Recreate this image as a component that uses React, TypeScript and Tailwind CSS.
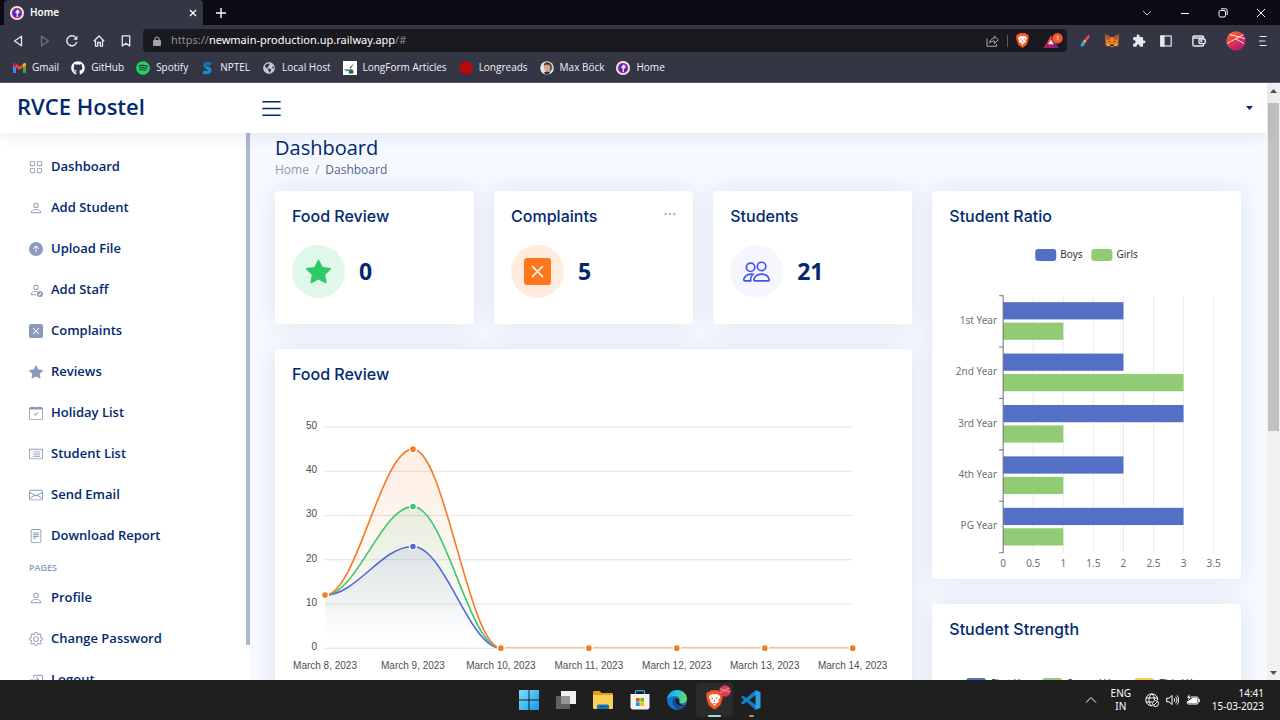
import React from 'react';
import {
  BsArrowUpCircleFill,
  BsBoxArrowInRight,
  BsCalendarCheck,
  BsCardList,
  BsEnvelope,
  BsFileText,
  BsGear,
  BsGrid,
  BsList,
  BsPeople,
  BsPerson,
  BsPersonCheck,
  BsStarFill,
  BsThreeDots,
  BsXSquareFill,
} from 'react-icons/bs';
import { FaGithub, FaSpotify, FaGlobeAmericas } from 'react-icons/fa';
import { MdExtension } from 'react-icons/md';

const menuItems = [
  { label: 'Dashboard', icon: BsGrid },
  { label: 'Add Student', icon: BsPerson },
  { label: 'Upload File', icon: BsArrowUpCircleFill },
  { label: 'Add Staff', icon: BsPersonCheck },
  { label: 'Complaints', icon: BsXSquareFill },
  { label: 'Reviews', icon: BsStarFill },
  { label: 'Holiday List', icon: BsCalendarCheck },
  { label: 'Student List', icon: BsCardList },
  { label: 'Send Email', icon: BsEnvelope },
  { label: 'Download Report', icon: BsFileText },
];

const pageItems = [
  { label: 'Profile', icon: BsPerson },
  { label: 'Change Password', icon: BsGear },
  { label: 'Logout', icon: BsBoxArrowInRight },
];

/* ---------- Browser icons ---------- */

function SiteIcon() {
  return (
    <svg viewBox="0 0 14 14" className="w-3.5 h-3.5 shrink-0">
      <circle cx="7" cy="7" r="7" fill="#f3eef8" />
      <circle cx="7" cy="7" r="4.6" fill="#2b2ee0" stroke="#d8285c" strokeWidth="1.4" />
      <path d="M7 3.6c1.8.2 3 1.4 2.6 3.2L8 8v3H6.600V7.400L5 6.800z" fill="#f0d8ee" />
    </svg>
  );
}

function GmailIcon() {
  return (
    <svg viewBox="0 0 13 10" className="w-[13px] h-2.5 shrink-0">
      <path d="M0 1.500V10h3V4.200z" fill="#4285f4" />
      <path d="M13 1.500V10h-3V4.200z" fill="#34a853" />
      <path d="M3 .8v3.700L6.500 7 10 4.500V.8L6.500 3.400z" fill="#ea4335" />
      <path d="M0 1.400C0 0 1.600-.4 3 .8v3.700L0 2.300z" fill="#c5221f" />
      <path d="M13 1.400C13 0 11.400-.4 10 .8v3.700l3-2.200z" fill="#fbbc04" />
    </svg>
  );
}

function NptelIcon() {
  return (
    <svg viewBox="0 0 12 14" className="w-3 h-3.5 shrink-0" fill="none" strokeWidth="3.2">
      <path d="M10 3.200C7 1.800 3.800 2 3.800 4.400c0 1.800 2 2.200 3.400 2.800" stroke="#1b6fae" />
      <path d="M5.500 6.600c2 .6 3.600 1.200 3.400 2.800C8.600 11.800 5 12 2 10.900" stroke="#1a8fd4" />
    </svg>
  );
}

function ArticlesIcon() {
  return (
    <svg viewBox="0 0 14 14" className="w-3.5 h-3.5 shrink-0">
      <rect width="14" height="14" fill="#fff" />
      <path d="M11.800 2 7.400 7.400l-1-1z" fill="#35523f" />
      <path d="M1.500 8.500c2 1.800 4 1.200 5.200 0M6 10c1-2 2.500-2 4-.6v2.800H6z" fill="#2e6b4d" stroke="#2e6b4d" strokeWidth=".7" />
    </svg>
  );
}

function LongreadsIcon() {
  return (
    <svg viewBox="0 0 14 14" className="w-3.5 h-3.5 shrink-0">
      <circle cx="7" cy="7" r="6.700" fill="#b50a0e" />
      <circle cx="7" cy="7" r="3" fill="none" stroke="#c21212" strokeWidth=".8" />
    </svg>
  );
}

function PortraitIcon() {
  return (
    <svg viewBox="0 0 14 14" className="w-3.5 h-3.5 shrink-0">
      <circle cx="7" cy="7" r="6.800" fill="#e9e7e4" />
      <path d="M9 1.500c2.600 1.200 3.600 3.600 3.300 6L9.500 12z" fill="#59605a" />
      <ellipse cx="7" cy="6.400" rx="3" ry="4" fill="#d9a384" />
      <path d="M3.700 5.600C3.600 2.600 5 1.200 7.200 1.200S10.600 3 10.200 5.600L9.300 3.800H5z" fill="#4a342a" />
      <path d="M4 11.500c2-1.500 4-1.500 6 0l-1.500 2h-3z" fill="#2f3136" />
    </svg>
  );
}

function BraveLion({ className }: { className: string }) {
  return (
    <svg viewBox="0 0 14 16" className={className}>
      <path d="M4 0h6l1.300 1.400 1.400-.1L14 3.300l-.5 1.300.3 1.300-2 6.500L7 16l-4.800-3.600-2-6.500.3-1.300L0 3.300l1.300-2 1.400.1z" fill="#fb5420" />
      <path d="M7 3.300 9 3l2.200 1.200.6 1.800-1.500 2 .5 1.500-2 1.200L7 13l-1.800-2.300-2-1.200.5-1.500-1.500-2 .6-1.800L5 3z" fill="#fff" />
      <path d="m3.800 5.600 2 .7-.3 1.300zM10.200 5.600l-2 .7.3 1.300zM7 7l.6 2L7 9.600 6.400 9zM5.600 10.400h2.800L7 11.500z" fill="#fb5420" />
    </svg>
  );
}

function RewardsIcon() {
  return (
    <svg viewBox="0 0 20 16" className="w-5 h-4">
      <path d="M8 2 4.200 9.500.5 15H4l4-4.500z" fill="#ff4724" />
      <path d="M.5 15h15L12 10.500H4z" fill="#9e1f63" />
      <path d="m8 2 7.500 13L8 10.500z" fill="#662d91" />
      <path d="m8 6.800 2.800 4.500H5.200z" fill="#fff" />
      <circle cx="14.500" cy="5.200" r="5.200" fill="#fb542b" />
      <path d="m13.800 4 1-.8v4" stroke="#fff" strokeWidth=".8" fill="none" />
    </svg>
  );
}

function BrushIcon() {
  return (
    <svg viewBox="0 0 10 12" className="w-2.5 h-3">
      <path d="M9.300.3c.9.700.4 2.200-.4 3.200L6.500 6.300 4.300 4.600 6.700 1.500C7.500.5 8.600-.2 9.300.3z" fill="#e2435c" />
      <path d="m4.300 4.600 2.200 1.700-1.400 1.800L3 6.300z" fill="#f4c06a" />
      <path d="M3 6.300l2.100 1.800c.2 2-1.800 3.700-4.600 3.300C1.600 10.200.8 7.600 3 6.300z" fill="#3da7c9" />
    </svg>
  );
}

function FoxIcon() {
  return (
    <svg viewBox="0 0 14 13" className="w-3.5 h-[13px]">
      <path d="M.6.300 5.400 3.300h3.200L13.400.300 13.800 5l-.6 3 .5 2-1.500 2.500-2.700-.7-1.500 1.100H6l-1.500-1.100-2.700.7L.3 10l.5-2-.6-3z" fill="#e8821e" />
      <path d="M.6.300 5.400 3.300 4.500 6 .8 5.200zM13.400.300 8.600 3.300l.9 2.700 3.700-.8z" fill="#b5562a" />
      <path d="m3.200 7 2 .3-.4 1.400zM10.800 7l-2 .3.400 1.400z" fill="#2b3341" />
      <path d="M5.600 10.600h2.800l.2 1.500H5.400z" fill="#16120f" />
      <path d="m1.800 12.200 1.400-2 1.500 1.300zM12.200 12.200l-1.400-2-1.500 1.300z" fill="#d8c3b4" />
    </svg>
  );
}

function AvatarIcon() {
  return (
    <svg viewBox="0 0 20 20" className="w-5 h-5">
      <defs>
        <linearGradient id="avatar" x1="0" y1="0" x2=".6" y2="1">
          <stop offset="0" stopColor="#ff7a2b" />
          <stop offset=".5" stopColor="#e8384a" />
          <stop offset="1" stopColor="#b8177c" />
        </linearGradient>
      </defs>
      <circle cx="10" cy="10" r="9.700" fill="url(#avatar)" />
      <path d="M3.500 3.500 19 7.500M1 12.500 17.500 3.500M10 8l8 4.500" stroke="#fde4dc" strokeWidth="1" fill="none" />
    </svg>
  );
}

/* ---------- Browser window ---------- */

function TabStrip() {
  return (
    <div className="flex h-[25px] shrink-0 items-center bg-[#0b0a15] pl-1 text-white">
      <div className="flex h-full w-[199px] items-center rounded-t bg-[#343644] pl-1.5 pr-1">
        <SiteIcon />
        <span className="ml-1.5 flex-1 text-[10px] font-semibold">Home</span>
        <button aria-label="Close tab" className="flex h-3 w-3 items-center justify-center">
          <svg viewBox="0 0 8 8" className="h-2 w-2" stroke="#fff" strokeWidth="1.300">
            <path d="m1 1 6 6M7 1 1 7" />
          </svg>
        </button>
      </div>
      <button aria-label="New tab" className="ml-3 flex h-3 w-3 items-center justify-center">
        <svg viewBox="0 0 10 10" className="h-2.5 w-2.5" stroke="#fff" strokeWidth="1.400">
          <path d="M5 0v10M0 5h10" />
        </svg>
      </button>
      <div className="ml-auto flex">
        <button aria-label="Search tabs" className="flex w-[38px] justify-center">
          <svg viewBox="0 0 10 10" className="h-2.5 w-2.5" fill="none" stroke="#b9b9c0">
            <path d="m1 3 4 4 4-4" />
          </svg>
        </button>
        <button aria-label="Minimize" className="flex w-[38px] justify-center">
          <svg viewBox="0 0 10 10" className="h-2.5 w-2.5" stroke="#fff">
            <path d="M1 5.500h8" />
          </svg>
        </button>
        <button aria-label="Restore" className="flex w-[38px] justify-center">
          <svg viewBox="0 0 10 10" className="h-2.5 w-2.5" fill="none" stroke="#fff">
            <rect x="1" y="2.500" width="6.500" height="6.500" rx="1.500" />
            <path d="M3 .8h4.500a1.700 1.700 0 0 1 1.700 1.700V7" />
          </svg>
        </button>
        <button aria-label="Close window" className="flex w-[38px] justify-center">
          <svg viewBox="0 0 10 10" className="h-2.5 w-2.5" stroke="#fff">
            <path d="m1 1 8 8M9 1 1 9" />
          </svg>
        </button>
      </div>
    </div>
  );
}

function ToolButton({ label, children }: { label: string; children: React.ReactNode }) {
  return (
    <button aria-label={label} className="flex h-6 w-[27px] shrink-0 items-center justify-center">
      {children}
    </button>
  );
}

function Toolbar() {
  return (
    <div className="flex h-[31px] shrink-0 items-center bg-[#343644] px-1 text-[#e8e8ee]">
      <ToolButton label="Back">
        <svg viewBox="0 0 12 12" className="h-3 w-3" fill="none" stroke="currentColor" strokeWidth="1.300" strokeLinejoin="round">
          <path d="M9.500 1.200v9.600L2.500 6z" />
        </svg>
      </ToolButton>
      <ToolButton label="Forward">
        <svg viewBox="0 0 12 12" className="h-3 w-3" fill="none" stroke="#72747f" strokeWidth="1.300" strokeLinejoin="round">
          <path d="M2.500 1.200v9.600l7-4.800z" />
        </svg>
      </ToolButton>
      <ToolButton label="Reload">
        <svg viewBox="0 0 12 12" className="h-3 w-3" fill="none" stroke="currentColor" strokeWidth="1.400">
          <path d="M10.700 7A5 5 0 1 1 9.500 2.300" />
          <path d="M11.400.8v4H7.300z" fill="currentColor" stroke="none" />
        </svg>
      </ToolButton>
      <ToolButton label="Home">
        <svg viewBox="0 0 12 12" className="h-3 w-3" fill="none" stroke="currentColor" strokeWidth="1.300" strokeLinejoin="round">
          <path d="M.8 6.200 6 1l5.200 5.200M2.500 5.500v5.700h2.200V7.500h2.600v3.700h2.200V5.500" />
        </svg>
      </ToolButton>
      <ToolButton label="Bookmark this page">
        <svg viewBox="0 0 12 12" className="h-3 w-3" fill="none" stroke="currentColor" strokeWidth="1.300" strokeLinejoin="round">
          <path d="M2.300.8h7.400v10.200L6 8.200l-3.700 2.800z" />
        </svg>
      </ToolButton>
      <div className="ml-1 flex h-[23px] min-w-0 flex-1 items-center rounded-sm bg-[#191a1f] pl-2.5 pr-1 text-[11px] text-[#8d8e94]">
        <svg viewBox="0 0 8 10" className="mr-2.5 h-2.5 w-2 shrink-0" fill="#a4a5a9">
          <rect y="4" width="8" height="6" rx="1" />
          <path d="M2 4.500V3a2 2 0 0 1 4 0v1.500" fill="none" stroke="#a4a5a9" strokeWidth="1.200" />
        </svg>
        <span>https://</span>
        <input
          aria-label="Address"
          defaultValue="newmain-production.up.railway.app"
          className="field-sizing-content bg-transparent text-white outline-none"
        />
        <span>/#</span>
        <div className="ml-auto flex items-center">
          <button aria-label="Share">
            <svg viewBox="0 0 13 12" className="h-3 w-[13px]" fill="none" stroke="#a9aab0">
              <path d="M1 3.500v7.700h9.500V9" />
              <path d="M3.500 8C4 5 5.800 3.500 8.300 3.300V1l4 3.800-4 3.700V6C6.300 6 4.800 6.600 3.500 8z" strokeLinejoin="round" />
            </svg>
          </button>
          <span className="mx-2 h-3 w-px bg-[#5c5d63]" />
          <button aria-label="Brave Shields">
            <BraveLion className="h-[15px] w-[13px]" />
          </button>
          <button aria-label="Brave Rewards" className="ml-3.5">
            <RewardsIcon />
          </button>
        </div>
      </div>
      <div className="ml-1 flex items-center">
        <ToolButton label="Color picker"><BrushIcon /></ToolButton>
        <ToolButton label="Wallet extension"><FoxIcon /></ToolButton>
        <ToolButton label="Extensions"><MdExtension className="h-3.5 w-3.5" /></ToolButton>
        <ToolButton label="Sidebar">
          <svg viewBox="0 0 12 12" className="h-3 w-3" fill="none" stroke="currentColor" strokeWidth="1.200">
            <rect x=".8" y="1" width="10.400" height="10" />
            <path d="M1 1h3v10H1z" fill="currentColor" />
          </svg>
        </ToolButton>
        <span className="w-1.5" />
        <ToolButton label="Wallet">
          <svg viewBox="0 0 14 12" className="h-3 w-3.5" fill="none" stroke="currentColor" strokeWidth="1.400">
            <path d="M11.500 3.500V2.200c0-.8-.5-1.200-1.300-1.200H2.300C1.500 1 .9 1.500.9 2.300v7.200c0 .9.600 1.500 1.400 1.500h8c.8 0 1.300-.5 1.300-1.300V9M1 3h10" />
            <rect x="7" y="4" width="6.200" height="4.600" rx="1" />
            <circle cx="9.300" cy="6.300" r=".5" />
          </svg>
        </ToolButton>
        <span className="w-2.5" />
        <ToolButton label="Profile"><AvatarIcon /></ToolButton>
        <ToolButton label="Menu">
          <svg viewBox="0 0 8 12" className="h-3 w-2" stroke="currentColor" strokeWidth="1.200">
            <path d="M.5 1.500h7M0 6h6.500M.5 10.500h7" />
          </svg>
        </ToolButton>
      </div>
    </div>
  );
}

const bookmarks = [
  { label: 'Gmail', icon: <GmailIcon /> },
  { label: 'GitHub', icon: <FaGithub className="h-3.5 w-3.5 text-white" /> },
  { label: 'Spotify', icon: <FaSpotify className="h-3.5 w-3.5 text-[#1ed760]" /> },
  { label: 'NPTEL', icon: <NptelIcon /> },
  { label: 'Local Host', icon: <FaGlobeAmericas className="h-3 w-3 text-[#c9cad2]" /> },
  { label: 'LongForm Articles', icon: <ArticlesIcon /> },
  { label: 'Longreads', icon: <LongreadsIcon /> },
  { label: 'Max Böck', icon: <PortraitIcon /> },
  { label: 'Home', icon: <SiteIcon /> },
];

function BookmarksBar() {
  return (
    <nav className="flex h-[27px] shrink-0 items-start gap-3 border-b border-[#5b5d69] bg-[#343644] pl-3 pt-1 font-['Open_Sans',sans-serif] text-[10px] text-[#f1f1f4]">
      {bookmarks.map((item) => (
        <a key={item.label} href="#" className="flex h-[15px] items-center gap-1.5 whitespace-nowrap">
          <span className="flex w-3.5 justify-center">{item.icon}</span>
          {item.label}
        </a>
      ))}
    </nav>
  );
}

/* ---------- Dashboard ---------- */

function SidebarLink({ label, icon: Icon }: { label: string; icon: React.ComponentType<{ className?: string }> }) {
  return (
    <li>
      <a href="#" className="flex h-[37px] items-center gap-2 rounded px-3 text-[13px] font-semibold text-[#012970]">
        <Icon className="h-3.5 w-3.5 text-[#899bbd]" />
        {label}
      </a>
    </li>
  );
}

function Sidebar() {
  return (
    <aside className="flex w-[250px] shrink-0 overflow-hidden bg-white font-['Open_Sans',sans-serif]">
      <ul className="flex flex-1 flex-col gap-1 px-[17px] pt-[15px]">
        {menuItems.map((item) => (
          <SidebarLink key={item.label} {...item} />
        ))}
        <li className="h-[17px] px-3 text-[9px] leading-5 font-semibold text-[#899bbd]">PAGES</li>
        {pageItems.map((item) => (
          <SidebarLink key={item.label} {...item} />
        ))}
      </ul>
      <div className="mb-[35px] w-1 bg-[#aab7cf]" />
    </aside>
  );
}

function Card({ title, menu, children }: { title: string; menu?: boolean; children: React.ReactNode }) {
  return (
    <section className="relative rounded bg-white pt-4 shadow-[0_0_25px_rgba(1,41,112,0.1)]">
      <h2 className="mb-px px-[17px] font-['Inter',sans-serif] text-base leading-[18px] font-medium text-[#012970]">{title}</h2>
      {menu && (
        <button aria-label="Card options" className="absolute right-4 top-4 text-[#aab7cf]">
          <BsThreeDots className="h-3.5 w-3.5" />
        </button>
      )}
      {children}
    </section>
  );
}

function StatCard({ title, value, menu, tint, children }: { title: string; value: string; menu?: boolean; tint: string; children: React.ReactNode }) {
  return (
    <Card title={title} menu={menu}>
      <div className="flex items-center gap-3.5 px-[17px] pb-[26px] pt-[19px]">
        <div className={`flex h-[53px] w-[53px] items-center justify-center rounded-full ${tint}`}>{children}</div>
        <span className="text-[23px] font-bold text-[#012970]">{value}</span>
      </div>
    </Card>
  );
}

const dates = ['March 8, 2023', 'March 9, 2023', 'March 10, 2023', 'March 11, 2023', 'March 12, 2023', 'March 13, 2023', 'March 14, 2023'];
const series = [
  { id: 'blue', color: '#5468dc', values: [12, 23, 0, 0, 0, 0, 0] },
  { id: 'green', color: '#3fc56f', values: [12, 32, 0, 0, 0, 0, 0] },
  { id: 'orange', color: '#f47a24', values: [12, 45, 0, 0, 0, 0, 0] },
];

const pointX = (i: number) => 33 + i * 87.9;
const pointY = (v: number) => 264 - v * 4.42;

function curve(values: number[]) {
  return values
    .map((v, i) => {
      if (i === 0) return `M${pointX(0)} ${pointY(v)}`;
      const bend = 87.9 * 0.36;
      return `C${pointX(i - 1) + bend} ${pointY(values[i - 1])} ${pointX(i) - bend} ${pointY(v)} ${pointX(i)} ${pointY(v)}`;
    })
    .join('');
}

function ReviewChart() {
  return (
    <svg viewBox="0 0 603 320" className="block w-full font-['Liberation_Sans',sans-serif]" fontSize="10" fill="#4a5053">
      <defs>
        {series.map((s) => (
          <linearGradient key={s.id} id={`fill-${s.id}`} x1="0" y1="0" x2="0" y2="1">
            <stop offset="0" stopColor={s.color} stopOpacity=".13" />
            <stop offset=".9" stopColor={s.color} stopOpacity="0" />
          </linearGradient>
        ))}
      </defs>
      {[0, 10, 20, 30, 40, 50].map((v) => (
        <g key={v}>
          <path d={`M33 ${pointY(v)}H560`} stroke="#e3e3e3" />
          <text x="25" y={pointY(v) + 2} textAnchor="end">{v}</text>
        </g>
      ))}
      {series.map((s) => (
        <path key={s.id} d={`${curve(s.values)}V264H33Z`} fill={`url(#fill-${s.id})`} />
      ))}
      {/* the flat tail is shared by all three series, so it is drawn once */}
      {series.map((s) => (
        <path key={s.id} d={curve(s.values.slice(0, 3))} fill="none" stroke={s.color} strokeWidth="1.600" />
      ))}
      <path d={`M${pointX(2)} 263.500H${pointX(6)}`} stroke="#f4ac7c" />
      {series.map((s) =>
        s.values.map((v, i) => (
          <circle key={`${s.id}${i}`} cx={pointX(i)} cy={pointY(v)} r="3.400" fill={s.color} stroke="#fff" strokeWidth="1.200" />
        ))
      )}
      {dates.map((d, i) => (
        <text key={d} x={pointX(i)} y="285" textAnchor="middle">{d}</text>
      ))}
    </svg>
  );
}

const ratio = [
  { label: '1st Year', boys: 2, girls: 1 },
  { label: '2nd Year', boys: 2, girls: 3 },
  { label: '3rd Year', boys: 3, girls: 1 },
  { label: '4th Year', boys: 2, girls: 1 },
  { label: 'PG Year', boys: 3, girls: 1 },
];

function RatioChart() {
  return (
    <svg viewBox="0 0 308 352" className="block w-full font-['Noto_Sans',sans-serif]" fontSize="10" fill="#6e7079">
      <rect x="103" y="23" width="21" height="12" rx="3" fill="#5470c6" />
      <text x="128" y="32" fill="#333">Boys</text>
      <rect x="159" y="23" width="21" height="12" rx="3" fill="#91cc75" />
      <text x="184" y="32" fill="#333">Girls</text>
      {[0, 0.5, 1, 1.5, 2, 2.5, 3, 3.5].map((v) => (
        <g key={v}>
          {v > 0 && <path d={`M${71 + v * 60} 70V326`} stroke="#e9ebf1" />}
          <text x={71 + v * 60} y="340" textAnchor="middle">{v}</text>
        </g>
      ))}
      {ratio.map((row, i) => (
        <g key={row.label}>
          <rect x="71" y={76 + i * 51.3} width={row.boys * 60} height="17.200" fill="#5470c6" />
          <rect x="71" y={96.4 + i * 51.3} width={row.girls * 60} height="17.200" fill="#91cc75" />
          <text x="65" y={97.5 + i * 51.3} textAnchor="end">{row.label}</text>
        </g>
      ))}
      <path d="M67 69.500h4v256.500h-4M67 120.800h4M67 172.100h4M67 223.400h4M67 274.700h4" fill="none" stroke="#6e7079" />
    </svg>
  );
}

function StrengthChart() {
  return (
    <svg viewBox="0 0 308 300" className="block w-full font-['Noto_Sans',sans-serif]" fontSize="10" fill="#333">
      <rect x="34" y="39" width="20" height="12" rx="3" fill="#5470c6" />
      <text x="59" y="48">First Year</text>
      <rect x="110" y="39" width="20" height="12" rx="3" fill="#91cc75" />
      <text x="135" y="48">Second Year</text>
      <rect x="202" y="39" width="20" height="12" rx="3" fill="#fac858" />
      <text x="227" y="48">Third Year</text>
    </svg>
  );
}

function Dashboard() {
  return (
    <main className="min-w-0 flex-1 overflow-hidden bg-[#f6f9ff] pl-[25px] pr-[26px] pt-0.5">
      <h1 className="text-xl leading-[26px] text-[#012970]">Dashboard</h1>
      <nav className="mb-3 flex gap-1.5 text-xs leading-[18px] text-[#899bbd]">
        <a href="#">Home</a>
        <span>/</span>
        <span className="text-[#51678f]">Dashboard</span>
      </nav>
      <div className="grid grid-cols-3 gap-5">
        <div className="col-span-2 flex flex-col gap-[25px]">
          <div className="grid grid-cols-3 gap-5">
            <StatCard title="Food Review" value="0" tint="bg-[#e0f8e9]">
              <BsStarFill className="h-[25px] w-[25px] text-[#2eca6a]" />
            </StatCard>
            <StatCard title="Complaints" value="5" tint="bg-[#ffecdf]" menu>
              <BsXSquareFill className="h-[27px] w-[27px] text-[#ff771d]" />
            </StatCard>
            <StatCard title="Students" value="21" tint="bg-[#f6f6fe]">
              <BsPeople className="h-[27px] w-[27px] text-[#4154f1]" />
            </StatCard>
          </div>
          <Card title="Food Review">
            <div className="px-[17px]">
              <ReviewChart />
            </div>
          </Card>
        </div>
        <div className="flex flex-col gap-[25px]">
          <Card title="Student Ratio">
            <RatioChart />
          </Card>
          <Card title="Student Strength">
            <StrengthChart />
          </Card>
        </div>
      </div>
    </main>
  );
}

function PageScrollbar() {
  return (
    <div className="flex w-[13px] shrink-0 flex-col items-center bg-[#f1f1f1]">
      <svg viewBox="0 0 13 20" className="h-5 w-[13px] shrink-0" fill="#505050">
        <path d="m6.500 6 3.500 4H3z" />
      </svg>
      <div className="h-[55%] w-[11px] bg-[#c1c1c1]" />
      <svg viewBox="0 0 13 14" className="mt-auto h-3.5 w-[13px] shrink-0" fill="#505050">
        <path d="M6.500 9 10 5H3z" />
      </svg>
    </div>
  );
}

/* ---------- Taskbar ---------- */

function TaskButton({ label, active, children }: { label: string; active?: boolean; children: React.ReactNode }) {
  return (
    <button aria-label={label} className={`relative flex h-[34px] w-[37px] items-center justify-center rounded ${active ? 'bg-[#2b2b2b]' : ''}`}>
      {children}
    </button>
  );
}

function Taskbar() {
  return (
    <footer className="grid h-10 shrink-0 grid-cols-[1fr_auto_1fr] items-center bg-[#1f1f1f] text-white">
      <div />
      <div className="flex">
        <TaskButton label="Start">
          <svg viewBox="0 0 20 20" className="h-5 w-5">
            <defs>
              <linearGradient id="win" x1="0" y1="0" x2="1" y2="1">
                <stop offset="0" stopColor="#7fe0fd" />
                <stop offset="1" stopColor="#1597e8" />
              </linearGradient>
            </defs>
            <path d="M0 0h9.500v9.500H0zM10.500 0H20v9.500h-9.500zM0 10.500h9.500V20H0zM10.500 10.500H20V20h-9.500z" fill="url(#win)" />
          </svg>
        </TaskButton>
        <TaskButton label="Task view">
          <svg viewBox="0 0 20 20" className="h-5 w-5">
            <rect x="5" y="1" width="15" height="13" fill="#f0f0f0" />
            <rect x="0" y="6" width="14" height="13" fill="#777" fillOpacity=".75" />
          </svg>
        </TaskButton>
        <TaskButton label="File Explorer">
          <svg viewBox="0 0 20 20" className="h-5 w-5">
            <path d="M0 2.500C0 1.500.5 1 1.500 1h5l2 2h10c1 0 1.500.5 1.500 1.500V8H0z" fill="#dfa01c" />
            <path d="M0 5h20v12.500c0 1-.5 1.500-1.500 1.500h-17C.5 19 0 18.500 0 17.500z" fill="#fcd053" />
            <path d="M4 19v-3c0-1 .6-1.500 1.500-1.500h9c.9 0 1.500.5 1.500 1.500v3z" fill="#1873c5" />
            <path d="M6.500 16.500h7" stroke="#0c4f93" />
          </svg>
        </TaskButton>
        <TaskButton label="Microsoft Store">
          <svg viewBox="0 0 20 20" className="h-5 w-5">
            <path d="M5.500 5V1.500c0-.6.300-.9.900-.9h7.200c.6 0 .9.300.9.900V5" fill="none" stroke="#35a7dc" strokeWidth="1.200" />
            <path d="M.5 4h19v13c0 1.500-1 2.500-2.500 2.500H3C1.500 19.500.5 18.500.5 17z" fill="#f2f2f2" />
            <path d="M6 8h3.700v3.700H6z" fill="#f25022" />
            <path d="M10.300 8H14v3.700h-3.700z" fill="#7fba00" />
            <path d="M6 12.300h3.700V16H6z" fill="#00a4ef" />
            <path d="M10.300 12.300H14V16h-3.700z" fill="#ffb900" />
          </svg>
        </TaskButton>
        <TaskButton label="Edge">
          <svg viewBox="0 0 20 20" className="h-5 w-5">
            <defs>
              <linearGradient id="edge-top" x1="0" y1=".3" x2="1" y2=".6">
                <stop offset="0" stopColor="#1e9fe8" />
                <stop offset=".5" stopColor="#2fc6d5" />
                <stop offset="1" stopColor="#66e04c" />
              </linearGradient>
            </defs>
            <circle cx="10" cy="10" r="10" fill="#1572cf" />
            <path d="M0 9.500C.6 4 4.800 0 10 0c6 0 10 4.200 10 8.500 0 3-2.200 4.800-5 4.800-2.200 0-3.200-.9-2.600-1.900C13.600 9 12 6 8.500 6 4.500 6 1 7.500 0 9.500z" fill="url(#edge-top)" />
            <path d="M7.500 7.500C3.500 10.500 5.500 18 12 19.600c2.600-.4 5-1.900 6.400-4-5 2.600-11.400.2-10.900-8.100z" fill="#0b4f9e" />
            <path d="M8.800 8C7 11.500 9.500 16 14 16c1.800 0 3.300-.4 4.600-1.300-.8.300-5.600 1-6.400-2.500.3-1.500.2-3.500-3.400-4.200z" fill="#1f1f1f" />
          </svg>
        </TaskButton>
        <TaskButton label="Brave" active>
          <BraveLion className="h-5 w-[17px]" />
          <svg viewBox="0 0 12 12" className="absolute right-0.5 top-0.5 h-3 w-3">
            <circle cx="6" cy="6" r="5.800" fill="#dc3a55" />
            <path d="M1 4l10 3M1 8l9-5" stroke="#f7b8ae" strokeWidth=".7" />
          </svg>
          <span className="absolute bottom-0 h-0.5 w-[13px] rounded bg-[#a9d5e8]" />
        </TaskButton>
        <TaskButton label="Visual Studio Code">
          <svg viewBox="0 0 20 20" className="h-5 w-5">
            <path d="M2 5.500.3 6.700v1L15 20v-5z" fill="#1279be" />
            <path d="M2 14.500.3 13.300v-1L15 0v5z" fill="#1585cc" />
            <path d="m14.500 0 5 2.200v15.600l-5 2.200z" fill="#2ba1ee" />
          </svg>
          <span className="absolute bottom-0 h-0.5 w-[5px] rounded bg-[#9a9a9a]" />
        </TaskButton>
      </div>
      <div className="flex items-center justify-end pr-4 text-[10px] leading-[13px]">
        <button aria-label="Show hidden icons">
          <svg viewBox="0 0 12 8" className="h-2 w-3" fill="none" stroke="#fff">
            <path d="m1 6.500 5-5 5 5" />
          </svg>
        </button>
        <button className="ml-3.5 w-5 text-center">
          <span className="flex justify-center">ENG</span>
          <span className="flex justify-center">IN</span>
        </button>
        <button aria-label="Network, volume and battery" className="ml-3.5 flex items-center gap-[7px]">
          <svg viewBox="0 0 14 14" className="h-3.5 w-3.5" fill="none" stroke="#fff">
            <path d="M7.500 12.800A6 6 0 1 1 12.800 7M1 5h11.500M1 9h6M6.800.8C3 4 3 10 6.800 13M6.800.8C8.800 2.800 9.500 4.500 9.600 7" />
            <circle cx="10.500" cy="10.500" r="3" />
            <path d="m8.500 12.500 4-4" />
          </svg>
          <svg viewBox="0 0 13 12" className="h-3 w-[13px]" fill="none" stroke="#fff">
            <path d="M.7 4.200H3L6 1.500v9L3 7.800H.7zM8 4.200c1 1 1 2.600 0 3.600M9.600 2.800c1.800 1.800 1.800 4.600 0 6.400M11 1.400c2.200 2.600 2.200 6.600 0 9.200" />
          </svg>
          <svg viewBox="0 0 14 12" className="h-3 w-3.5" fill="none" stroke="#fff">
            <path d="M5 3h6c.8 0 1.200.4 1.200 1.200v4.600c0 .8-.4 1.200-1.200 1.200H2.500c-.8 0-1.200-.4-1.200-1.200V7M13.300 5v3" />
            <path d="M6 4.300h4.900v4.400H2.600V7L6 5z" fill="#fff" />
            <path d="M3.500 0 1 3.800h1.800L2 6.800l3-4H3.200z" fill="#fff" stroke="none" />
          </svg>
        </button>
        <button className="ml-3 text-right">
          <span className="flex justify-end">14:41</span>
          <span className="flex justify-end">15-03-2023</span>
        </button>
      </div>
    </footer>
  );
}

export default function App() {
  return (
    <div className="flex h-screen flex-col overflow-hidden font-['Noto_Sans',sans-serif]">
      <TabStrip />
      <Toolbar />
      <BookmarksBar />
      <div className="flex min-h-0 flex-1">
        <div className="flex min-w-0 flex-1 flex-col font-['Open_Sans',sans-serif]">
          <header className="z-10 flex h-[50px] shrink-0 items-center justify-between bg-white pl-[17px] pr-3.5 text-[#012970] shadow-[0_2px_17px_rgba(1,41,112,0.1)]">
            <div className="flex items-center">
              <a href="#" className="w-[241px] pb-1 text-[22px] leading-7 font-semibold">RVCE Hostel</a>
              <button aria-label="Toggle sidebar">
                <BsList className="h-[27px] w-[27px]" />
              </button>
            </div>
            <button aria-label="Account menu">
              <svg viewBox="0 0 7 4" className="h-1 w-[7px]" fill="currentColor">
                <path d="M0 0h7L3.500 4z" />
              </svg>
            </button>
          </header>
          <div className="flex min-h-0 flex-1">
            <Sidebar />
            <Dashboard />
          </div>
        </div>
        <PageScrollbar />
      </div>
      <Taskbar />
    </div>
  );
}
